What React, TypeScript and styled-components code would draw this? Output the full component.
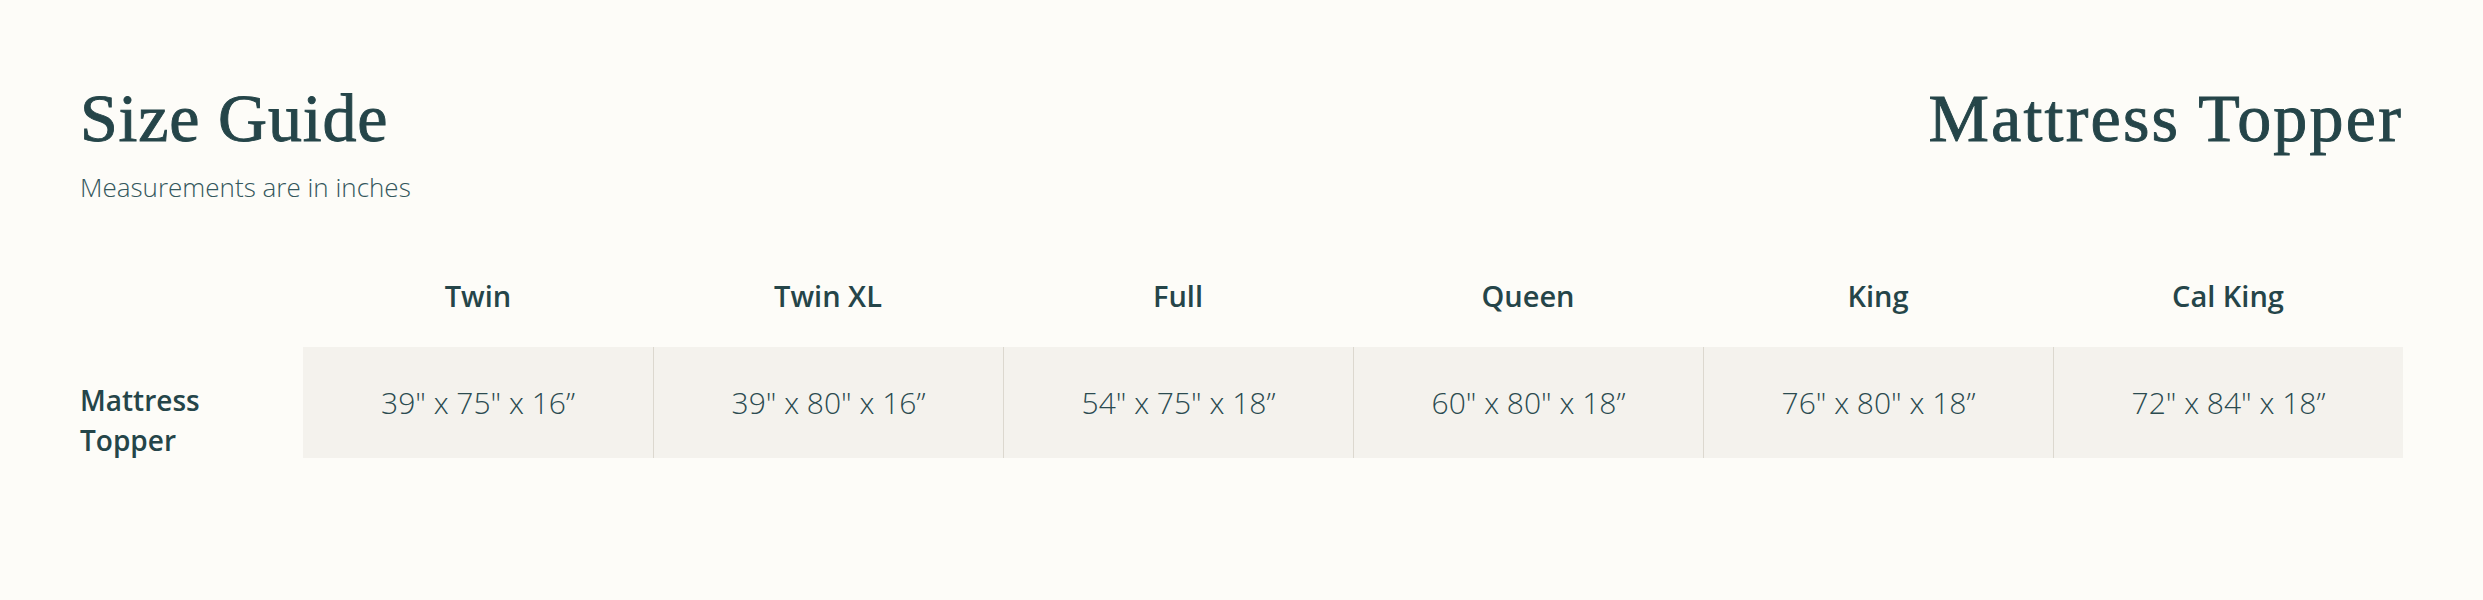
import React from "react";
import styled, {createGlobalStyle} from "styled-components";

const GlobalStyle = createGlobalStyle`
  html, body {
    margin: 0;
    padding: 0;
    background: #fdfcf8;
  }
  body {
    font-family: "Open Sans", "Liberation Sans", sans-serif;
    color: #254549;
  }
`;

const Page = styled.div`
  min-height: 600px;
  box-sizing: border-box;
  padding: 78px 80px 0 80px;
  background: #fdfcf8;
`;

const Header = styled.div`
  display: flex;
  justify-content: space-between;
  align-items: flex-start;
`;

const Title = styled.h1<{$spacing?: number}>`
  margin: 0;
  font-family: "Liberation Serif", serif;
  font-weight: 400;
  font-size: 68px;
  line-height: 1.2;
  letter-spacing: ${p => p.$spacing ?? 0.5}px;
  -webkit-text-stroke: 0.9px #254549;
  color: #254549;
`;

const Sub = styled.p`
  margin: 9px 0 0 0;
  font-size: 26px;
  font-weight: 300;
  line-height: 1.4;
  color: #34575c;
`;

const Table = styled.div`
  display: grid;
  grid-template-columns: 223px repeat(6, 1fr);
  margin-top: 71px;
`;

const HeadCell = styled.div`
  font-size: 29px;
  font-weight: 600;
  line-height: 40px;
  text-align: center;
  padding-bottom: 31px;
  color: #254549;
`;

const RowLabel = styled.div`
  font-size: 28px;
  font-weight: 600;
  line-height: 40px;
  padding-top: 33px;
  color: #254549;
`;

const Cell = styled.div<{$first?: boolean}>`
  height: 111px;
  display: flex;
  align-items: center;
  justify-content: center;
  background: #f4f2ed;
  border-left: ${p => (p.$first ? "none" : "1px solid #dcd8cf")};
  font-size: 30px;
  font-weight: 300;
  color: #2b4b50;
`;

const sizes = ["Twin", "Twin XL", "Full", "Queen", "King", "Cal King"];
const topper = [
  "39\" x 75\" x 16\u201D",
  "39\" x 80\" x 16\u201D",
  "54\" x 75\" x 18\u201D",
  "60\" x 80\" x 18\u201D",
  "76\" x 80\" x 18\u201D",
  "72\" x 84\" x 18\u201D"
];

function App() {
  return (
    <Page>
      <GlobalStyle />
      <Header>
        <div>
          <Title $spacing={0.8}>Size Guide</Title>
          <Sub>Measurements are in inches</Sub>
        </div>
        <Title as="h2" $spacing={2.2}>
          Mattress Topper
        </Title>
      </Header>
      <Table>
        <div />
        {sizes.map(s => (
          <HeadCell key={s}>{s}</HeadCell>
        ))}
        <RowLabel>
          Mattress
          <br />
          Topper
        </RowLabel>
        {topper.map((v, idx) => (
          <Cell key={idx} $first={idx === 0}>
            {v}
          </Cell>
        ))}
      </Table>
    </Page>
  );
}

export default App;
